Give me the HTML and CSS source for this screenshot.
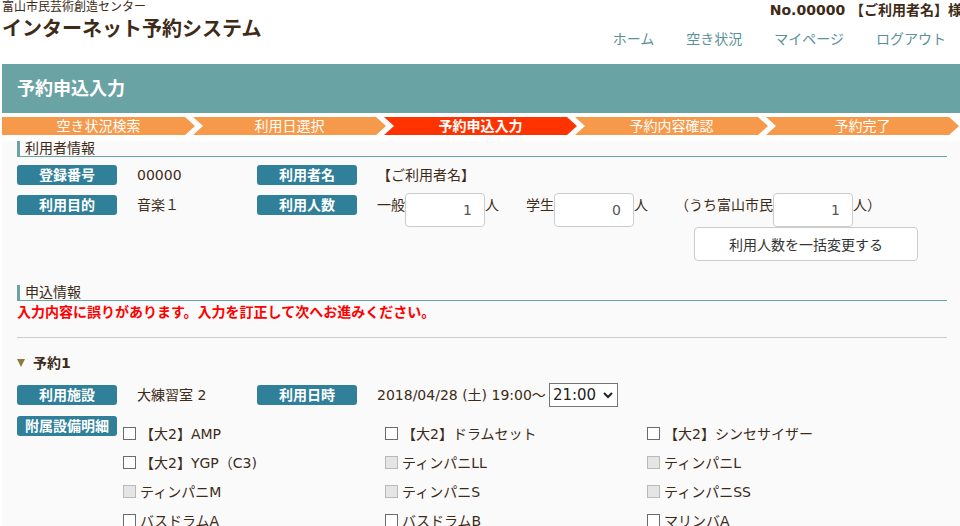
FILE: index.html
```html
<!DOCTYPE html>
<html lang="ja">
<head>
  <meta charset="UTF-8" />
  <meta name="viewport" content="width=device-width, initial-scale=1.0"/>
  <title>インターネット予約システム</title>
  <link rel="stylesheet" href="styles.css">
</head>
<body>
  <div class="page">
    <header class="site-header">
      <div class="header-left">
        <div class="org">富山市民芸術創造センター</div>
        <div class="system">インターネット予約システム</div>
      </div>
      <div class="header-right">
        <div class="user">No.00000 【ご利用者名】様</div>
        <nav class="nav">
          <a href="#">ホーム</a>
          <a href="#">空き状況</a>
          <a href="#">マイページ</a>
          <a href="#">ログアウト</a>
        </nav>
      </div>
    </header>

    <h1 class="page-title">予約申込入力</h1>

    <div class="steps">
      <div class="step">空き状況検索</div>
      <div class="step">利用日選択</div>
      <div class="step current">予約申込入力</div>
      <div class="step">予約内容確認</div>
      <div class="step">予約完了</div>
    </div>

    <div class="content">
      <h2 class="section-title">利用者情報</h2>

      <div class="info-row">
        <div class="badge">登録番号</div>
        <div class="value">00000</div>
        <div class="badge">利用者名</div>
        <div class="value-wide">【ご利用者名】</div>
      </div>

      <div class="info-row people-row">
        <div class="badge">利用目的</div>
        <div class="value">音楽１</div>
        <div class="badge">利用人数</div>
        <div class="value-wide">
          <span class="unit-text">一般</span>
          <input class="count" type="text" value="1">
          <span class="unit-text unit-gap">人</span>
          <span class="unit-text">学生</span>
          <input class="count" type="text" value="0">
          <span class="unit-text unit-gap">人</span>
          <span class="unit-text">（うち富山市民</span>
          <input class="count" type="text" value="1">
          <span class="unit-text">人）</span>
        </div>
      </div>
      <button class="bulk" type="button">利用人数を一括変更する</button>

      <h2 class="section-title apply-title">申込情報</h2>
      <p class="error">入力内容に誤りがあります。入力を訂正して次へお進みください。</p>
      <hr class="divider">

      <h3 class="reserve-title">
        <svg width="8" height="8" viewBox="0 0 8 8"><polygon points="0,0 8,0 4,8" fill="#8a7b3f"/></svg>
        予約1
      </h3>

      <div class="info-row facility-row">
        <div class="badge">利用施設</div>
        <div class="value">大練習室 2</div>
        <div class="badge">利用日時</div>
        <div class="value-wide">
          <span>2018/04/28 (土) 19:00～</span>
          <span class="time-select">
            <select>
              <option>21:00</option>
              <option>20:00</option>
            </select>
            <svg width="10" height="7" viewBox="0 0 10 7"><polyline points="1,1 5,5 9,1" fill="none" stroke="#222" stroke-width="2"/></svg>
          </span>
        </div>
      </div>

      <div class="info-row equip-row">
        <div class="badge">附属設備明細</div>
        <div class="equip-grid">
          <label class="option"><input type="checkbox">【大2】AMP</label>
          <label class="option"><input type="checkbox">【大2】ドラムセット</label>
          <label class="option"><input type="checkbox">【大2】シンセサイザー</label>
          <label class="option"><input type="checkbox">【大2】YGP（C3)</label>
          <label class="option"><input type="checkbox" disabled>ティンパニLL</label>
          <label class="option"><input type="checkbox" disabled>ティンパニL</label>
          <label class="option"><input type="checkbox" disabled>ティンパニM</label>
          <label class="option"><input type="checkbox" disabled>ティンパニS</label>
          <label class="option"><input type="checkbox" disabled>ティンパニSS</label>
          <label class="option"><input type="checkbox">バスドラムA</label>
          <label class="option"><input type="checkbox">バスドラムB</label>
          <label class="option"><input type="checkbox">マリンバA</label>
        </div>
      </div>
    </div>
  </div>
</body>
</html>
```

FILE: styles.css
```css
body {
  margin: 0;
  font-family: "DejaVu Sans", "Noto Sans CJK JP", sans-serif;
  font-size: 14px;
  color: #3d2b17;
  background: #fff;
  overflow-x: hidden;
}

.page {
  width: 960px;
  margin-left: 2px;
}

/* header */
.site-header {
  display: flex;
  justify-content: space-between;
  height: 64px;
}

.org {
  font-size: 12px;
  line-height: 14px;
}

.system {
  margin-top: 3px;
  font-size: 20px;
  font-weight: bold;
  line-height: 24px;
}

.header-right {
  display: flex;
  flex-direction: column;
  align-items: flex-end;
}

.user {
  font-weight: bold;
  line-height: 20px;
  white-space: nowrap;
}

.nav {
  display: flex;
  gap: 32px;
  margin-top: 10px;
  padding-right: 16px;
  line-height: 18px;
}

.nav a {
  color: #5b9198;
  text-decoration: none;
}

/* title and steps */
.page-title {
  margin: 0;
  height: 49px;
  line-height: 49px;
  padding-left: 15px;
  background: #6aa3a3;
  color: #fff;
  font-size: 18px;
  font-weight: bold;
}

.steps {
  display: flex;
  margin-top: 4px;
  height: 18px;
}

.step {
  flex: 0 0 193px;
  margin-left: -2px;
  background: #f7994a;
  color: #fff;
  text-align: center;
  line-height: 18px;
  clip-path: polygon(0 0, calc(100% - 10px) 0, 100% 50%, calc(100% - 10px) 100%, 0 100%, 10px 50%);
}

.step:first-child {
  margin-left: 0;
  clip-path: polygon(0 0, calc(100% - 10px) 0, 100% 50%, calc(100% - 10px) 100%, 0 100%);
}

.step.current {
  background: #ff3300;
  font-weight: bold;
}

/* content */
.content {
  margin-top: 6px;
  padding: 0 15px 40px;
  background: #fafafa;
}

.section-title {
  margin: 0;
  padding-left: 5px;
  border-left: 3px solid #6aa3a3;
  border-bottom: 1px solid #6aa3a3;
  font-size: 14px;
  font-weight: normal;
  line-height: 15px;
}

.info-row {
  display: flex;
  align-items: flex-start;
  margin-top: 8px;
}

.badge {
  flex: 0 0 100px;
  height: 20px;
  line-height: 20px;
  border-radius: 3px;
  background: #30809a;
  color: #fff;
  font-weight: bold;
  text-align: center;
}

.value {
  flex: 0 0 140px;
  box-sizing: border-box;
  padding-left: 20px;
  line-height: 20px;
}

.value-wide {
  display: flex;
  align-items: flex-start;
  padding-left: 20px;
  line-height: 20px;
}

.people-row .badge,
.people-row .value,
.unit-text {
  margin-top: 2px;
}

.unit-text {
  white-space: nowrap;
}

.unit-gap {
  margin-right: 27px;
}

.count {
  width: 80px;
  height: 34px;
  box-sizing: border-box;
  margin: 0;
  padding: 0 12px 0 0;
  border: 1px solid #ccc;
  border-radius: 4px;
  background: #fff;
  color: #555;
  font: inherit;
  text-align: right;
}

.bulk {
  display: block;
  width: 224px;
  height: 34px;
  margin: 0 0 0 677px;
  border: 1px solid #ccc;
  border-radius: 4px;
  background: #fff;
  color: #333;
  font: inherit;
}

.apply-title {
  margin-top: 24px;
}

.error {
  margin: 2px 0 0;
  color: #f00;
  font-weight: bold;
  line-height: 18px;
}

.divider {
  margin: 16px 0 0;
  border: 0;
  border-top: 1px solid #ccc;
}

.reserve-title {
  display: flex;
  align-items: center;
  gap: 8px;
  margin: 15px 0 0;
  font-size: 14px;
  line-height: 20px;
}

.facility-row {
  align-items: center;
  height: 24px;
  margin-top: 10px;
}

.facility-row .value-wide {
  align-items: center;
}

.time-select {
  display: inline-flex;
  align-items: center;
  width: 69px;
  height: 24px;
  box-sizing: border-box;
  margin-left: 3px;
  border: 1px solid #767676;
  background: #fff;
}

.time-select select {
  flex: 1;
  min-width: 0;
  padding: 0 0 0 3px;
  border: none;
  background: transparent;
  color: #222;
  font-family: inherit;
  font-size: 15px;
  appearance: none;
}

.time-select svg {
  flex: none;
  margin-right: 4px;
}

.equip-row {
  margin-top: 9px;
}

.equip-grid {
  display: grid;
  grid-template-columns: repeat(3, 262px);
  grid-auto-rows: 29px;
  align-items: center;
  margin: 3px 0 0 6px;
}

.option {
  display: flex;
  align-items: center;
  gap: 4px;
  line-height: 20px;
  white-space: nowrap;
}

.option input {
  flex: none;
  width: 13px;
  height: 13px;
  margin: 0;
  border: 1px solid #6b6b6b;
  background: #fff;
  appearance: none;
}

.option input:disabled {
  border-color: #b9b9b9;
  background: #e5e5e5;
}
```
